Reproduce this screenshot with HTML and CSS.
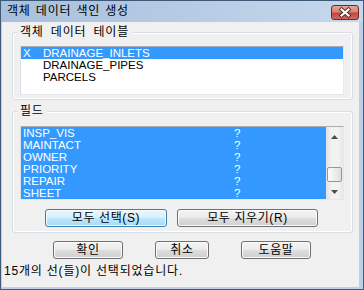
FILE: index.html
```html
<!DOCTYPE html>
<html lang="ko">
<head>
<meta charset="utf-8">
<title>객체 데이터 색인 생성</title>
<link rel="stylesheet" href="styles.css">
</head>
<body>
<div class="window">
  <div class="titlebar">
    <span class="title">객체 데이터 색인 생성</span>
    <div class="close">
      <svg width="28" height="15" viewBox="0 0 28 15">
        <path d="M10.5 4.5 L17.5 10.5 M17.5 4.5 L10.5 10.5" stroke="#4a2a28" stroke-width="4" stroke-linecap="square" fill="none"/>
        <path d="M10.5 4.5 L17.5 10.5 M17.5 4.5 L10.5 10.5" stroke="#ffffff" stroke-width="2.2" stroke-linecap="square" fill="none"/>
      </svg>
    </div>
  </div>
  <div class="client">
    <fieldset class="group g1">
      <legend>객체 데이터 테이블</legend>
      <div class="list l1">
        <div class="row sel"><span class="mark">X</span><span>DRAINAGE_INLETS</span></div>
        <div class="row"><span class="mark"></span><span>DRAINAGE_PIPES</span></div>
        <div class="row"><span class="mark"></span><span>PARCELS</span></div>
      </div>
    </fieldset>
    <fieldset class="group g2">
      <legend>필드</legend>
      <div class="list l2">
        <div class="rows">
          <div class="row sel"><span class="name">INSP_VIS</span><span>?</span></div>
          <div class="row sel"><span class="name">MAINTACT</span><span>?</span></div>
          <div class="row sel"><span class="name">OWNER</span><span>?</span></div>
          <div class="row sel"><span class="name">PRIORITY</span><span>?</span></div>
          <div class="row sel"><span class="name">REPAIR</span><span>?</span></div>
          <div class="row sel"><span class="name">SHEET</span><span>?</span></div>
        </div>
        <div class="scroll">
          <div class="arrow"><svg width="7" height="4" viewBox="0 0 7 4"><polygon points="3.5,0 7,4 0,4" fill="#4a4a4a"/></svg></div>
          <div class="track"></div>
          <div class="thumb"></div>
          <div class="arrow"><svg width="7" height="4" viewBox="0 0 7 4"><polygon points="0,0 7,0 3.5,4" fill="#4a4a4a"/></svg></div>
        </div>
      </div>
      <div class="btnrow">
        <div class="btn default w-sel">모두 선택(S)</div>
        <div class="btn w-clr">모두 지우기(R)</div>
      </div>
    </fieldset>
    <div class="actions">
      <div class="btn w-ok">확인</div>
      <div class="btn w-cancel">취소</div>
      <div class="btn w-ok">도움말</div>
    </div>
    <div class="status">15개의 선(들)이 선택되었습니다.</div>
  </div>
</div>
</body>
</html>
```
FILE: styles.css
```css
html, body {
  margin: 0;
  padding: 0;
  background: #f0f0f0;
}

.window {
  width: 364px;
  height: 290px;
  box-sizing: border-box;
  border: 1px solid #3f5a78;
  background: #bcd1e9;
  display: flex;
  flex-direction: column;
  font-family: "Liberation Sans", "Noto Sans CJK KR", sans-serif;
  font-size: 12px;
  color: #000;
}

.titlebar {
  height: 21px;
  flex: none;
  display: flex;
  align-items: flex-start;
  padding-left: 6px;
  background: linear-gradient(to right, #a9c0dc 0%, #b7cce5 55%, #c6d8ec 100%);
}

.title {
  margin-top: 3px;
  line-height: 14px;
  font-size: 12px;
  letter-spacing: 0.8px;
  word-spacing: 1px;
}

.close {
  margin-left: auto;
  margin-top: 4px;
  margin-right: 4px;
  width: 28px;
  height: 15px;
  box-sizing: border-box;
  border: 1px solid #6b2a24;
  border-radius: 3px;
  background: linear-gradient(#e3a597 0%, #d78270 48%, #c2443a 52%, #d06a5a 100%);
  display: flex;
  align-items: center;
  justify-content: center;
}

.close svg {
  display: block;
  margin: -1px;
}

.client {
  flex: 1;
  margin: 0 4px 2px 1px;
  background: #f0f0f0;
  padding-top: 3px;
  display: flex;
  flex-direction: column;
}

.group {
  margin: 0 6px 0 10px;
  border: 1px solid #d5dfe5;
  border-radius: 3px;
  box-shadow: inset 0 0 0 1px #ffffff;
  min-width: 0;
}

.group legend {
  margin-left: -3px;
  padding: 0 3px;
  line-height: 14px;
  font-size: 12px;
  background: #f0f0f0;
  letter-spacing: 0.8px;
  word-spacing: 3px;
}

.g1 {
  padding: 7px 8px 4px 7px;
}

.g2 {
  margin-top: 4px;
  padding: 8px 8px 5px 7px;
}

.list {
  background: #ffffff;
  border: 1px solid;
  border-color: #abadb3 #e3e9ef #e3e9ef #dbdfe6;
  font-size: 11.5px;
}

.l1 {
  height: 47px;
}

.l2 {
  display: flex;
  height: 72px;
}

.rows {
  flex: 1;
}

.row {
  display: flex;
  height: 12px;
  line-height: 12px;
  padding-left: 2px;
  white-space: nowrap;
}

.row.sel {
  background: #3399ff;
  color: #ffffff;
}

.mark {
  width: 20px;
}

.name {
  width: 211px;
}

.scroll {
  width: 17px;
  display: flex;
  flex-direction: column;
  background: linear-gradient(to right, #e2e2e2 0%, #f2f2f2 35%, #f2f2f2 70%, #e8e8e8 100%);
}

.arrow {
  height: 17px;
  box-sizing: border-box;
  padding-top: 2px;
  display: flex;
  align-items: center;
  justify-content: center;
}

.arrow svg {
  display: block;
}

.track {
  height: 23px;
}

.thumb {
  height: 15px;
  margin: 0 1px;
  box-sizing: border-box;
  border: 1px solid #979797;
  border-radius: 2px;
  background: linear-gradient(to right, #fbfbfb 0%, #ececec 60%, #dedede 100%);
}

.btnrow {
  display: flex;
  gap: 10px;
  margin-top: 9px;
  padding-left: 25px;
}

.btn {
  height: 18px;
  box-sizing: border-box;
  border: 1px solid #707070;
  border-radius: 3px;
  background: linear-gradient(#f4f4f4 0%, #ebebeb 48%, #dddddd 52%, #cfcfcf 100%);
  box-shadow: inset 0 0 0 1px #fbfbfb;
  display: flex;
  align-items: center;
  justify-content: center;
  font-size: 12px;
  line-height: 14px;
  letter-spacing: 0.6px;
  white-space: nowrap;
}

.btn.default {
  border-color: #3c7fb1;
  background: linear-gradient(#eaf6fd 0%, #d9f0fc 48%, #bee6fd 52%, #a7d9f5 100%);
  box-shadow: inset 0 0 0 1px #f4fbff;
}

.w-sel { width: 122px; }
.w-clr { width: 141px; }
.w-ok { width: 70px; }
.w-cancel { width: 54px; }

.actions {
  display: flex;
  gap: 32px;
  margin-top: 8px;
  padding-left: 51px;
}

.status {
  margin-top: 5px;
  padding-left: 2px;
  line-height: 14px;
  font-size: 12px;
  letter-spacing: 0.8px;
}
```
